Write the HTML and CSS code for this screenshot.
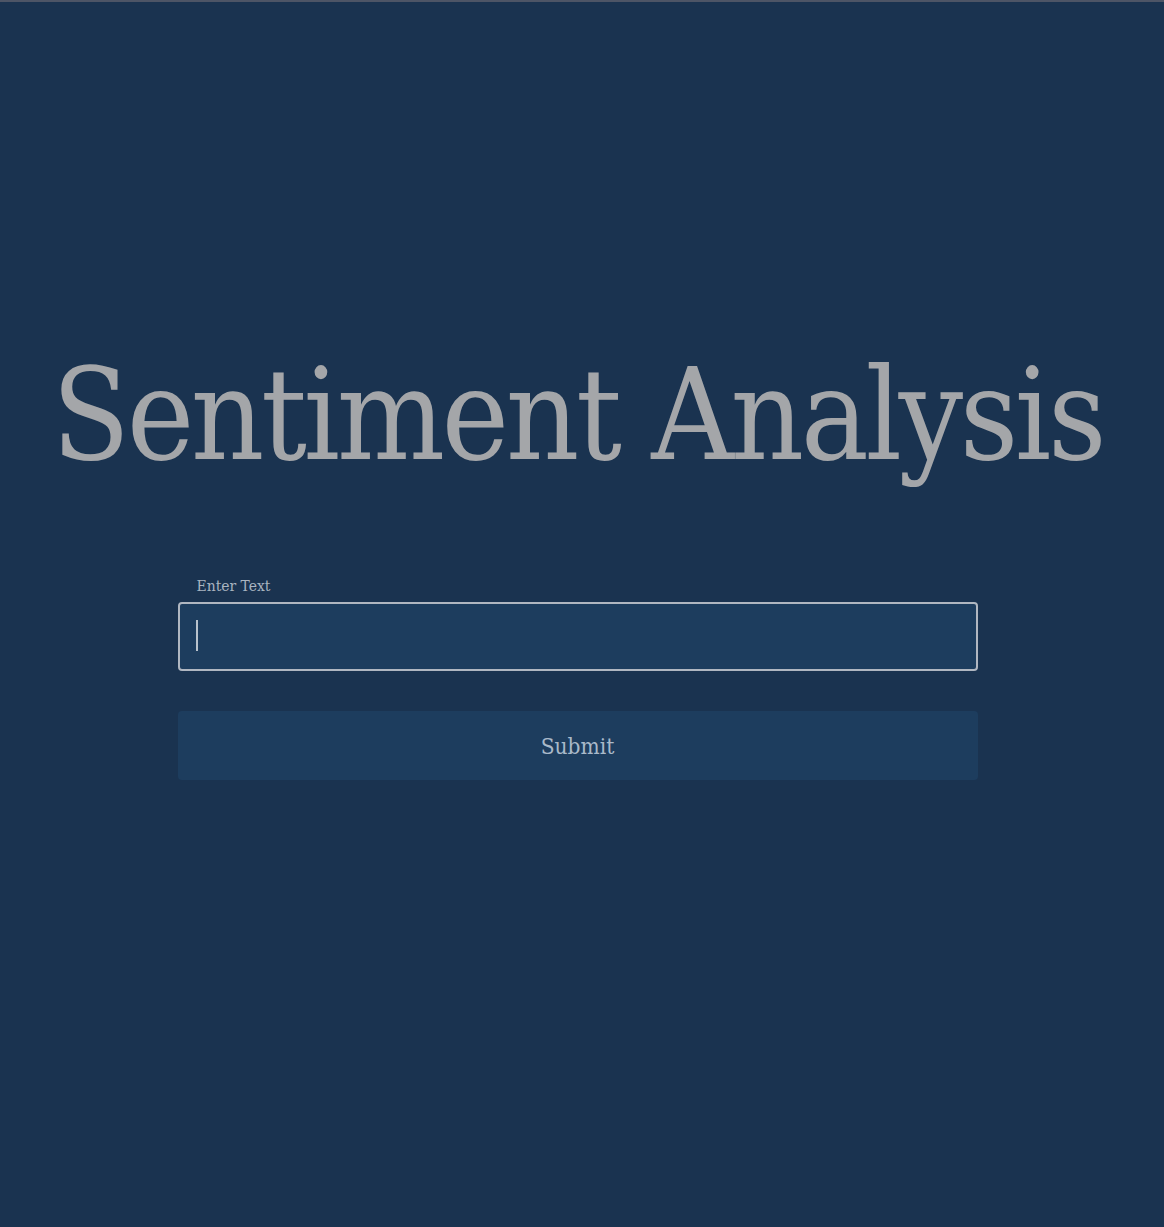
FILE: index.html
```html
<!DOCTYPE html>
<html lang="en">
<head>
<meta charset="utf-8">
<title>Sentiment Analysis</title>
<link rel="stylesheet" href="styles.css">
</head>
<body>
  <div class="topline"></div>
  <main class="page">
    <h1 class="title">Sentiment Analysis</h1>
    <form class="form">
      <label class="label" for="text">Enter Text</label>
      <div class="field">
        <input class="input" id="text" type="text">
        <span class="caret"></span>
      </div>
      <button class="submit" type="button">Submit</button>
    </form>
  </main>
</body>
</html>
```
FILE: styles.css
```css
html, body {
  margin: 0;
  padding: 0;
  height: 100%;
}

body {
  background: #1a3350;
  font-family: "DejaVu Serif", "Liberation Serif", serif;
  font-stretch: condensed;
  color: #a6a9ad;
}

.topline {
  height: 2px;
  background: #4d5566;
}

.page {
  display: flex;
  flex-direction: column;
  align-items: center;
  padding-right: 9px;
}

.title {
  margin: 333px 0 0;
  font-weight: normal;
  font-size: 127px;
  letter-spacing: -3.4px;
  line-height: 160px;
  color: #a4a6a9;
  white-space: nowrap;
}

.form {
  width: 800px;
  margin-top: 81px;
  display: flex;
  flex-direction: column;
}

.label {
  margin-left: 19px;
  font-size: 15.5px;
  line-height: 20px;
  color: #a9b4c0;
  margin-bottom: 6px;
}

.field {
  position: relative;
}

.input {
  box-sizing: border-box;
  width: 100%;
  height: 69px;
  margin: 0;
  border: 2px solid #b0b7c1;
  border-radius: 4px;
  background: #1d3d5e;
  outline: none;
  padding: 0 18px;
  font: inherit;
  color: #c8ced6;
}

.caret {
  position: absolute;
  left: 18px;
  top: 18px;
  width: 2px;
  height: 31px;
  background: #b8c2cc;
}

.submit {
  margin-top: 40px;
  height: 69px;
  border: 0;
  border-radius: 4px;
  background: #1d3d5e;
  font-family: inherit;
  font-stretch: condensed;
  font-size: 22.5px;
  color: #a9b9c9;
  cursor: pointer;
}
```
